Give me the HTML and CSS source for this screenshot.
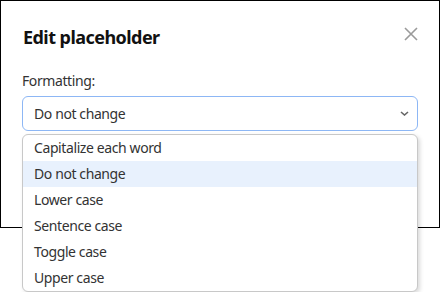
FILE: index.html
```html
<!DOCTYPE html>
<html>
<head>
<meta charset="utf-8">
<link rel="stylesheet" href="styles.css">
</head>
<body>
<div class="page">
  <div class="dialog">
    <div class="header">
      <h1 class="title">Edit placeholder</h1>
      <span class="close" aria-label="Close">
        <svg width="14" height="14" viewBox="0 0 14 14"><path d="M1 1 L13 13 M13 1 L1 13" stroke="#9a9a9a" stroke-width="1.6" fill="none"/></svg>
      </span>
    </div>
    <div class="body">
      <div class="label">Formatting:</div>
      <div class="select-wrap">
        <div class="select">
          <span>Do not change</span>
          <svg class="chev" width="9" height="5" viewBox="0 0 9 5"><path d="M1 1 L4.5 4 L8 1" stroke="#666" stroke-width="1.6" fill="none"/></svg>
        </div>
        <ul class="menu">
          <li>Capitalize each word</li>
          <li class="active">Do not change</li>
          <li>Lower case</li>
          <li>Sentence case</li>
          <li>Toggle case</li>
          <li>Upper case</li>
        </ul>
      </div>
    </div>
  </div>
</div>
</body>
</html>
```
FILE: styles.css
```css
html, body {
  margin: 0;
  padding: 0;
  background: #fff;
}
body {
  font-family: "Noto Sans", "Open Sans", sans-serif;
  color: #333;
}
.page {
  width: 440px;
  height: 292px;
  overflow: hidden;
}
.dialog {
  box-sizing: border-box;
  width: 440px;
  height: 228px;
  border: 1px solid #000;
  background: #fff;
}
.header {
  display: flex;
  justify-content: space-between;
  align-items: flex-start;
  padding: 22px 21px 0 22px;
  height: 28px;
}
.title {
  margin: 0;
  font-size: 18px;
  font-weight: 700;
  color: #111;
  line-height: 28px;
  letter-spacing: -0.55px;
}
.close {
  display: flex;
  width: 14px;
  height: 14px;
  margin-top: 4px;
}
.body {
  padding: 20px 21px 0 21px;
}
.label {
  font-size: 14px;
  line-height: 20px;
  margin-bottom: 5px;
  letter-spacing: -0.4px;
}
.select-wrap {
  position: relative;
}
.select {
  box-sizing: border-box;
  height: 35px;
  border: 1px solid #8db7f5;
  border-radius: 6px;
  display: flex;
  align-items: center;
  justify-content: space-between;
  padding: 0 8px 0 11px;
  font-size: 14px;
  letter-spacing: -0.4px;
}
.menu {
  position: absolute;
  top: 38px;
  left: 0;
  right: 0;
  margin: 0;
  padding: 0;
  list-style: none;
  background: #fff;
  border: 1px solid #c8c8c8;
  border-radius: 6px;
  box-shadow: 2px 2px 4px rgba(0,0,0,0.15);
}
.menu li {
  height: 26px;
  line-height: 26px;
  padding: 0 11px;
  font-size: 14px;
  letter-spacing: -0.4px;
}
.menu li.active {
  background: #e8f1fd;
}
```
